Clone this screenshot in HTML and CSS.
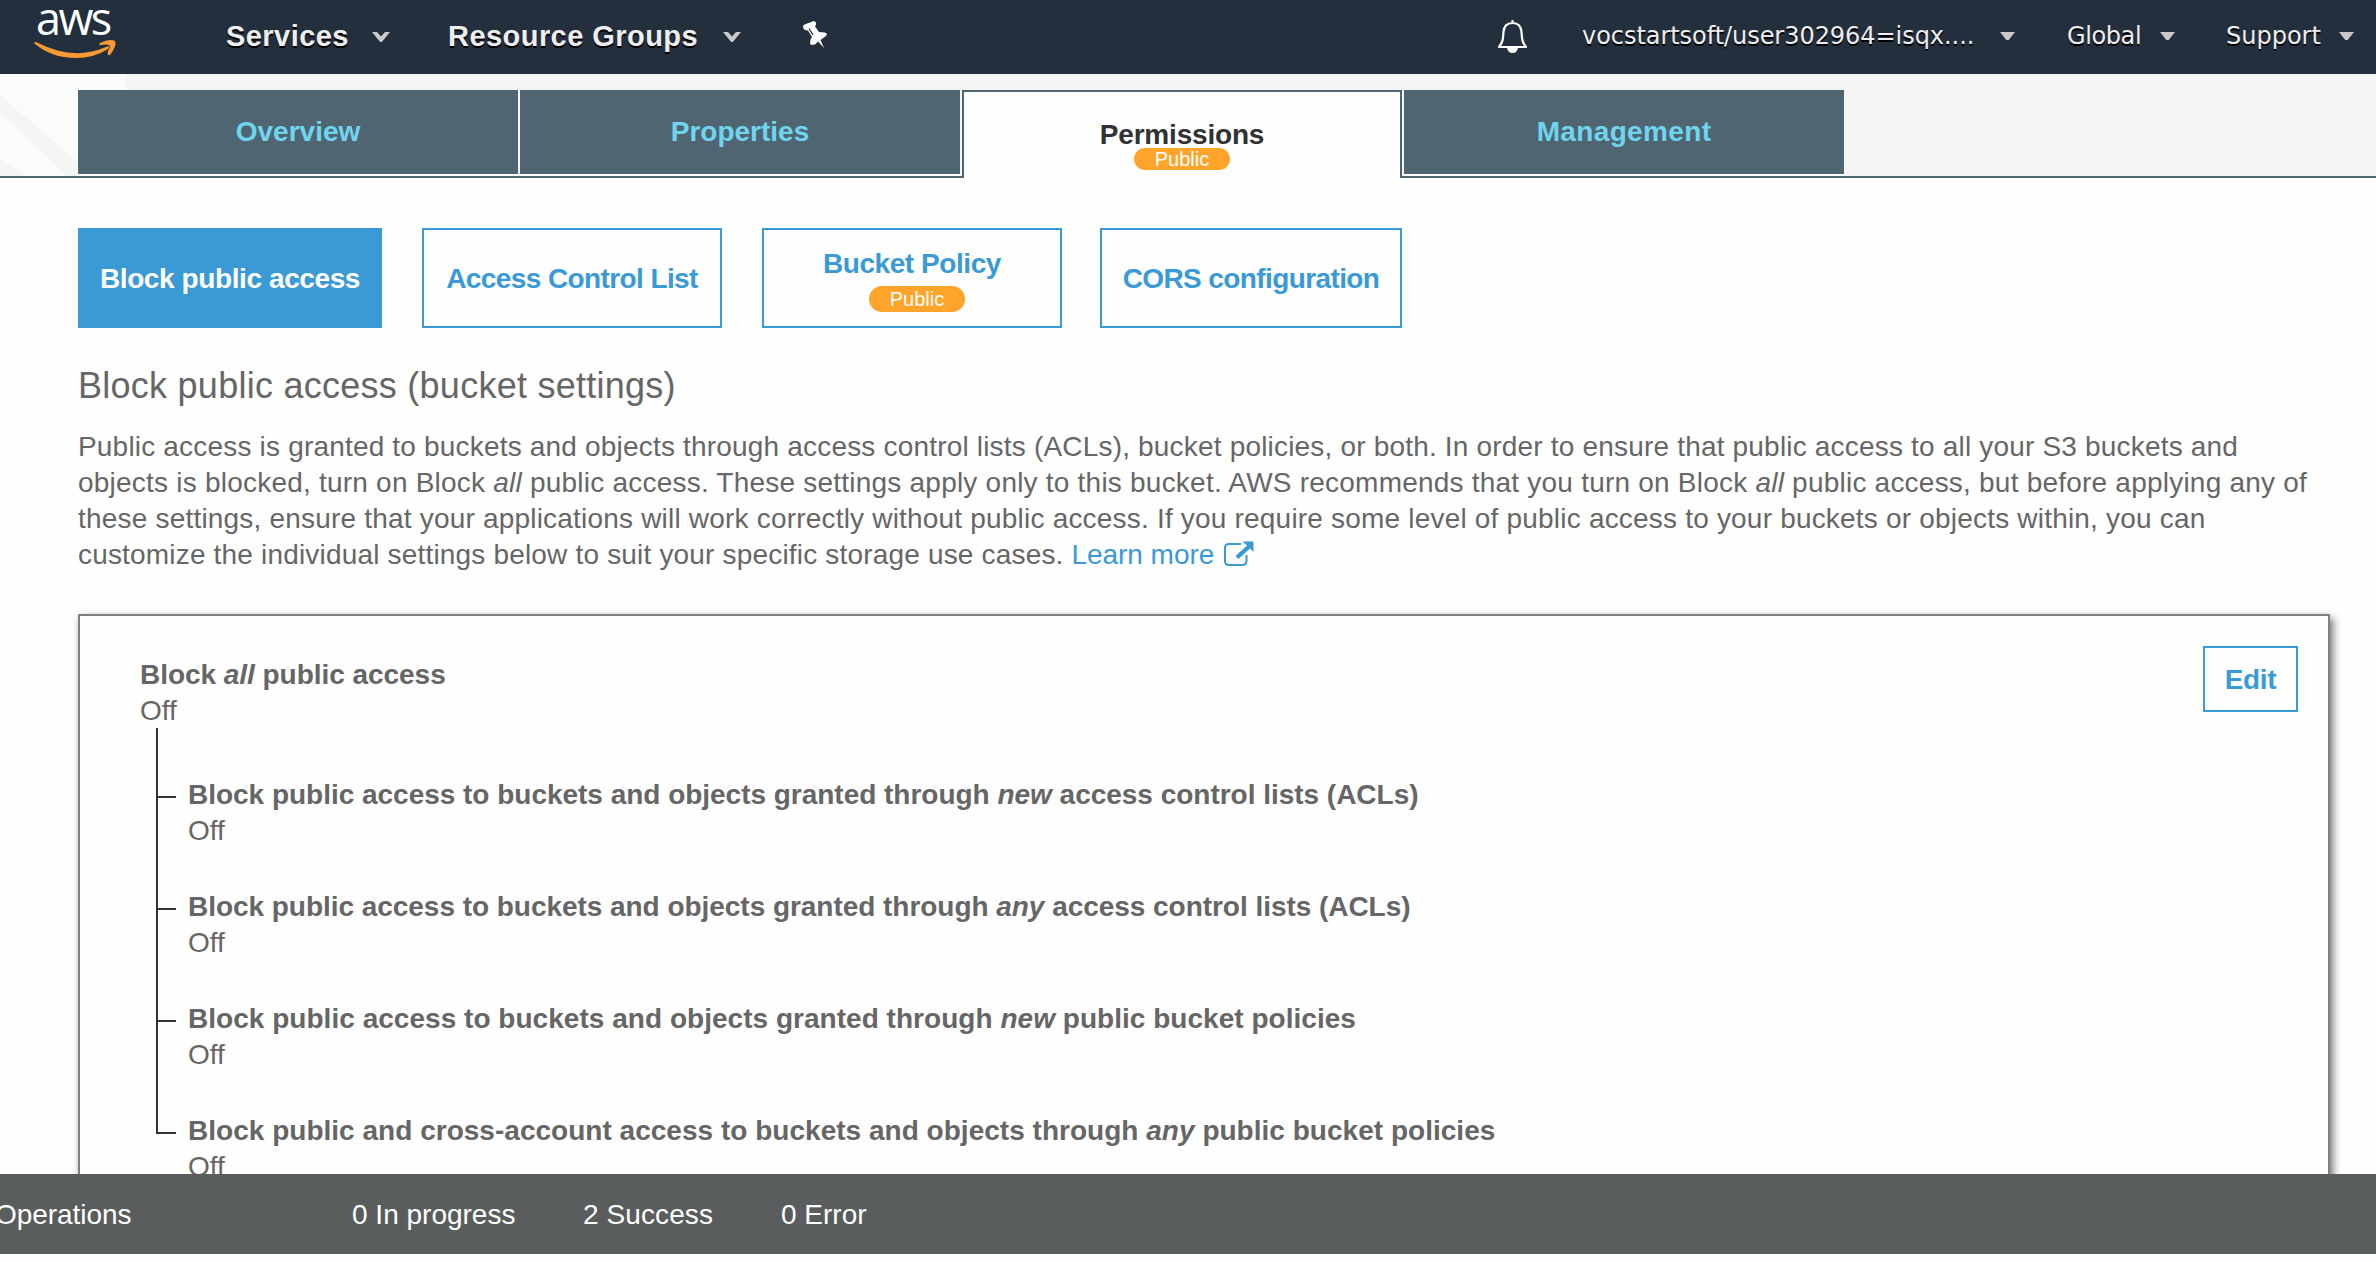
FILE: index.html
```html
<!DOCTYPE html>
<html lang="en">
<head>
<meta charset="utf-8">
<title>Block public access</title>
<link rel="stylesheet" href="styles.css">
</head>
<body>
<header class="topbar">
  <a class="logo" aria-label="aws">
    <span class="logo-word">aws</span>
    <svg class="smile" viewBox="0 0 84 32" width="84" height="32"><path d="M0 2Q1 0 4 2Q40 20 72 6Q77 4 74 8Q60 17 42 17Q17 17 0 2Z" fill="#f79a34"/><path d="M66 2Q76-3 81 0Q83 5 76 14Q73 15 74 10Q77 5 75 4Q72 3 67 4Q64 4 66 2Z" fill="#f79a34"/></svg>
  </a>
  <nav class="nav-left">
    <a class="nav-main services">Services</a><i class="caret"></i>
    <a class="nav-main groups">Resource Groups</a><i class="caret"></i>
    <svg class="pin" viewBox="0 0 26 28" width="26" height="28"><path d="M0 5L1.500 3.500L11 0L13 1.500V3.500L12 5.500L16 11L22 11.500L24 13L23 15L17.500 19L21 27L15 20.500L12 23.500L8 24L7 22L7.500 18.500L9 16L5 9.500L2 9L0.500 7.500Z" fill="#fff"/><path d="M6 7.500L10 14" stroke="#242f3e" stroke-width="1.300"/></svg>
  </nav>
  <nav class="nav-right">
    <svg class="bell" viewBox="0 0 31 35" width="31" height="35"><path d="M15.500 1V4M2 28C6 23 6 20 6.500 13C7 6 11 4 15.500 4S24 6 24.500 13C25 20 25 23 29 28Z" fill="none" stroke="#fff" stroke-width="2.200" stroke-linejoin="round"/><path d="M10 29Q11 34 15.500 34T21 29" fill="#fff"/></svg>
    <a class="nav-item user">vocstartsoft/user302964=isqx....</a><i class="caret small"></i>
    <a class="nav-item global">Global</a><i class="caret small"></i>
    <a class="nav-item support">Support</a><i class="caret small"></i>
  </nav>
</header>
<div class="tabband">
  <svg class="backdrop" viewBox="0 0 140 102" width="140" height="102"><path d="M0 0H126Q119 50 135 102H0Z" fill="#fafcfb"/><path d="M0 21L100 108V134L0 38Z M0 85L28 102H0Z" fill="#f4f6f6"/></svg>
  <div class="tabs">
    <a class="tab">Overview</a>
    <a class="tab">Properties</a>
    <a class="tab active"><span class="t-perm">Permissions</span><span class="badge slim">Public</span></a>
    <a class="tab management">Management</a>
  </div>
</div>
<main class="content">
  <div class="subtabs">
    <a class="subtab on">Block public access</a>
    <a class="subtab acl">Access Control List</a>
    <a class="subtab policy"><span>Bucket Policy</span><span class="badge">Public</span></a>
    <a class="subtab cors">CORS configuration</a>
  </div>
  <h1 class="title">Block public access (bucket settings)</h1>
  <p class="intro">
    <span class="l1">Public access is granted to buckets and objects through access control lists (ACLs), bucket policies, or both. In order to ensure that public access to all your S3 buckets and</span><br>
    <span class="l2">objects is blocked, turn on Block <em>all</em> public access. These settings apply only to this bucket. AWS recommends that you turn on Block <em>all</em> public access, but before applying any of</span><br>
    <span class="l3">these settings, ensure that your applications will work correctly without public access. If you require some level of public access to your buckets or objects within, you can</span><br>
    <span class="l4">customize the individual settings below to suit your specific storage use cases. <a class="link">Learn more</a></span><svg class="ext" viewBox="0 0 30 26" width="30" height="26"><path d="M17 3H5Q1 3 1 7V20Q1 24 5 24H18Q22.500 24 22.500 20V14" fill="none" stroke="#3a9ad5" stroke-width="2"/><path d="M18.500 0.500H29.500V11L26 7.500L14.500 18L11.500 15L23 4.500Z" fill="#3a9ad5"/></svg>
  </p>
  <section class="panel">
    <div class="panel-head">
      <div class="setting"><b class="s0">Block <em>all</em> public access</b><span>Off</span></div>
      <button class="edit">Edit</button>
    </div>
    <ul class="tree">
      <li class="setting"><b class="s1">Block public access to buckets and objects granted through <em>new</em> access control lists (ACLs)</b><span>Off</span></li>
      <li class="setting"><b class="s2">Block public access to buckets and objects granted through <em>any</em> access control lists (ACLs)</b><span>Off</span></li>
      <li class="setting"><b class="s3">Block public access to buckets and objects granted through <em>new</em> public bucket policies</b><span>Off</span></li>
      <li class="setting"><b class="s4">Block public and cross-account access to buckets and objects through <em>any</em> public bucket policies</b><span>Off</span></li>
    </ul>
  </section>
</main>
<footer class="opsbar">
  <span class="ops">Operations</span><span class="prog">0 In progress</span><span class="succ">2 Success</span><span class="err">0 Error</span>
</footer>
</body>
</html>
```
FILE: styles.css
```css
* { box-sizing: border-box; }
body { margin: 0; height: 1262px; overflow: hidden; display: flex; flex-direction: column; background: #fefefe; color: #666; font: 28px/36px "Liberation Sans", Arial, sans-serif; white-space: nowrap; }

/* Console header */
.topbar { height: 74px; flex: none; background: #242f3e; color: #eee; display: flex; justify-content: space-between; text-shadow: 0 2px 0 #000; }
.logo { width: 192px; padding-left: 34px; flex: none; display: flex; flex-direction: column; text-shadow: none; }
.logo-word { height: 41px; margin-left: 2px; font: 500 45px/36px "Open Sans", "Noto Sans", sans-serif; letter-spacing: -2.6px; color: #fff; }
.smile { flex: none; overflow: visible; }
.nav-left { display: flex; align-items: center; height: 72px; flex: 1; }
.nav-main { font-weight: bold; font-size: 29px; letter-spacing: .45px; }
.services { margin-left: 34px; width: 146px; }
.groups { margin-left: 58px; width: 275px; }
.caret { flex: none; width: 18px; height: 10px; margin-top: 2px; background: #c9c9c9; clip-path: polygon(0 0, 28% 0, 50% 45%, 72% 0, 100% 0, 55% 100%, 45% 100%); }
.caret.small { width: 15px; height: 8px; margin-top: 0; clip-path: polygon(0 0, 100% 0, 58% 100%, 42% 100%); }
.pin { margin-left: 62px; margin-top: -3px; }
.nav-right { display: flex; align-items: center; height: 72px; padding-right: 22px; font: 24px/36px "DejaVu Sans", Verdana, sans-serif; }
.user { margin-left: 54px; width: 418px; letter-spacing: -.05px; }
.global { margin-left: 52px; width: 93px; letter-spacing: -.4px; }
.support { margin-left: 51px; width: 113px; }

/* Main tabs */
.tabband { height: 104px; flex: none; position: relative; background: #f4f6f6; border-bottom: 2px solid #4f6672; padding: 16px 0 0 78px; }
.backdrop { position: absolute; left: 0; top: 0; }
.tabs { position: relative; display: grid; grid-template-columns: repeat(4, 440px); gap: 2px; }
.tab { height: 84px; background: #4f6672; color: #6fd5ef; font-weight: bold; display: flex; flex-direction: column; align-items: center; justify-content: center; box-shadow: 0 2px 0 #fefefe; }
.tab.active { height: 88px; background: #fefefe; color: #303233; border: 2px solid #4f6672; border-bottom: 0; box-shadow: none; justify-content: flex-start; padding-top: 25px; }
.t-perm { letter-spacing: -.2px; }
.management { letter-spacing: .35px; }
.badge { width: 96px; height: 26px; border-radius: 13px; background: #ffa42b; color: #fff; font: 20px/26px "Liberation Sans", Arial, sans-serif; letter-spacing: 0; text-align: center; margin-left: 10px; }
.badge.slim { height: 22px; line-height: 22px; margin-top: -5px; margin-left: 0; }

/* Permission sections */
.content { flex: none; height: 996px; overflow: hidden; padding: 50px 46px 0 78px; }
.subtabs { display: flex; gap: 38px; }
.subtab { width: 300px; height: 100px; padding-top: 2px; border: 2px solid #3a9ad5; color: #3a9ad5; font-weight: bold; letter-spacing: -.6px; display: flex; flex-direction: column; align-items: center; justify-content: center; gap: 4px; }
.on { width: 304px; background: #3a9ad5; color: #fff; margin-right: 2px; letter-spacing: -.4px; }
.policy { margin-left: 2px; letter-spacing: -.43px; }
.cors { width: 302px; }
.title { font-size: 36px; line-height: 44px; font-weight: normal; letter-spacing: .26px; margin: 36px 0 21px; }
.intro { margin: 0; height: 144px; }
.l1 { letter-spacing: .186px; }
.l2 { letter-spacing: .22px; }
.l3 { letter-spacing: .197px; }
.l4 { letter-spacing: .18px; }
.link { color: #3a9ad5; letter-spacing: -.05px; }
.ext { margin-left: 10px; vertical-align: -3px; }

/* Bucket settings */
.panel { margin-top: 41px; height: 700px; border: 2px solid #808080; background: #fefefe; box-shadow: 3px 4px 8px rgba(0,0,0,.55); padding: 30px 30px 0 60px; }
.panel-head { display: flex; justify-content: space-between; align-items: flex-start; height: 82px; padding-top: 11px; }
.setting { display: flex; flex-direction: column; align-items: flex-start; }
.edit { width: 95px; height: 66px; border: 2px solid #3a9ad5; background: none; color: #3a9ad5; font: bold 28px/36px "Liberation Sans", Arial, sans-serif; letter-spacing: -.4px; padding: 2px 0 0; margin-top: -11px; }
.tree { list-style: none; margin: 0 0 0 16px; padding: 0; position: relative; }
.tree::before { content: ""; position: absolute; left: 0; top: 0; height: 406px; width: 2px; background: #333; }
.tree li { height: 112px; padding: 49px 0 0 32px; position: relative; }
.tree li::before { content: ""; position: absolute; left: 0; top: 68px; width: 20px; height: 2px; background: #333; }
.s0 { letter-spacing: -.04px; }
.s1 { letter-spacing: -.02px; }
.s2 { letter-spacing: -.04px; }
.s3 { letter-spacing: .03px; }
.s4 { letter-spacing: .02px; }

/* Operations status */
.opsbar { height: 80px; padding-top: 1px; flex: none; background: #595d5d; color: #fff; display: flex; align-items: center; }
.ops { width: 357px; margin-left: -5px; letter-spacing: -.05px; }
.prog { width: 231px; }
.succ { width: 198px; letter-spacing: .1px; }
```
